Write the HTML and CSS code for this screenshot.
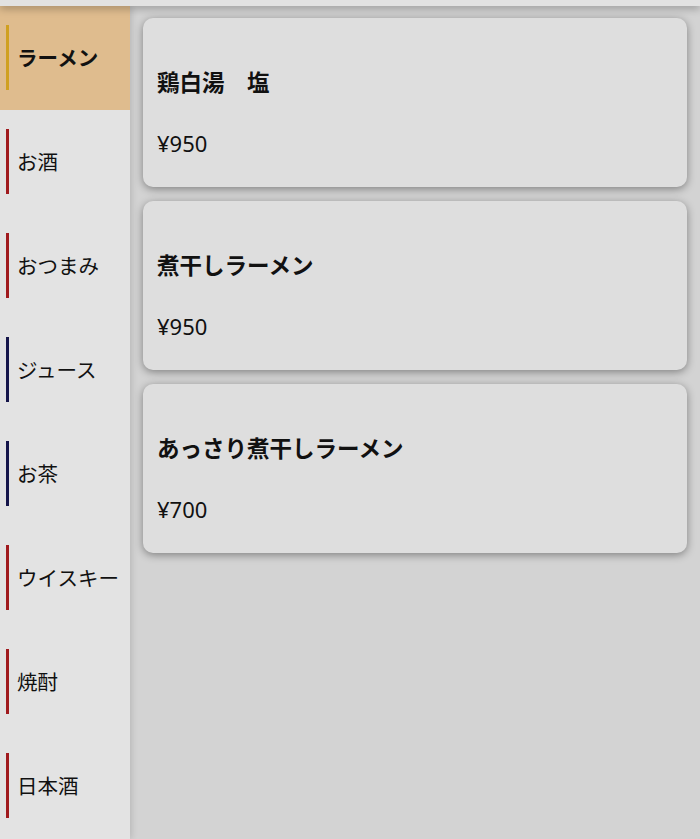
FILE: index.html
```html
<!DOCTYPE html>
<html lang="ja">
<head>
  <meta charset="UTF-8" />
  <meta name="viewport" content="width=device-width, initial-scale=1.0"/>
  <title>メニュー</title>
  <link rel="stylesheet" href="styles.css">
</head>
<body>
  <div class="topbar"></div>
  <div class="layout">
    <nav class="side">
      <div class="cat active"><span class="label gold">ラーメン</span></div>
      <div class="cat"><span class="label red">お酒</span></div>
      <div class="cat"><span class="label red">おつまみ</span></div>
      <div class="cat"><span class="label navy">ジュース</span></div>
      <div class="cat"><span class="label navy">お茶</span></div>
      <div class="cat"><span class="label red">ウイスキー</span></div>
      <div class="cat"><span class="label red">焼酎</span></div>
      <div class="cat"><span class="label red">日本酒</span></div>
    </nav>
    <main class="list">
      <div class="card">
        <h3 class="name">鶏白湯　塩</h3>
        <p class="price">¥950</p>
      </div>
      <div class="card">
        <h3 class="name">煮干しラーメン</h3>
        <p class="price">¥950</p>
      </div>
      <div class="card">
        <h3 class="name">あっさり煮干しラーメン</h3>
        <p class="price">¥700</p>
      </div>
    </main>
  </div>
</body>
</html>
```
FILE: styles.css
```css
body {
  margin: 0;
  font-family: "Noto Sans", "Noto Sans CJK JP", sans-serif;
  background: #d3d3d3;
  color: #111;
  height: 839px;
  overflow: hidden;
}
.topbar {
  height: 6px;
  background: #e2e2e2;
  box-shadow: 0 2px 8px rgba(0, 0, 0, 0.35);
  position: relative;
  z-index: 2;
}
.layout {
  display: flex;
  height: 833px;
}
.side {
  width: 130px;
  flex-shrink: 0;
  background: #e3e3e3;
  box-shadow: 2px 0 6px rgba(0, 0, 0, 0.12);
  position: relative;
  z-index: 1;
}
.cat {
  height: 104px;
  display: flex;
  align-items: center;
  padding-left: 6px;
}
.cat.active {
  background: #dfbc8e;
  font-weight: bold;
}
.label {
  display: flex;
  align-items: center;
  height: 65px;
  border-left: 3px solid;
  padding-left: 8px;
  font-size: 20.5px;
  margin-top: -2px;
}
.gold { border-color: #d0a020; }
.red { border-color: #a01a1e; }
.navy { border-color: #15154a; }
.list {
  flex: 1;
  padding: 12px 13px 0;
  display: flex;
  flex-direction: column;
  gap: 14px;
}
.card {
  background: #dedede;
  border-radius: 10px;
  box-shadow: 0 2px 9px rgba(0, 0, 0, 0.4);
  padding: 50px 14px 29px;
}
.name {
  margin: 0;
  font-size: 22.5px;
  line-height: 30px;
  font-weight: bold;
}
.price {
  margin: 30px 0 0;
  font-size: 22px;
  line-height: 30px;
}
```
